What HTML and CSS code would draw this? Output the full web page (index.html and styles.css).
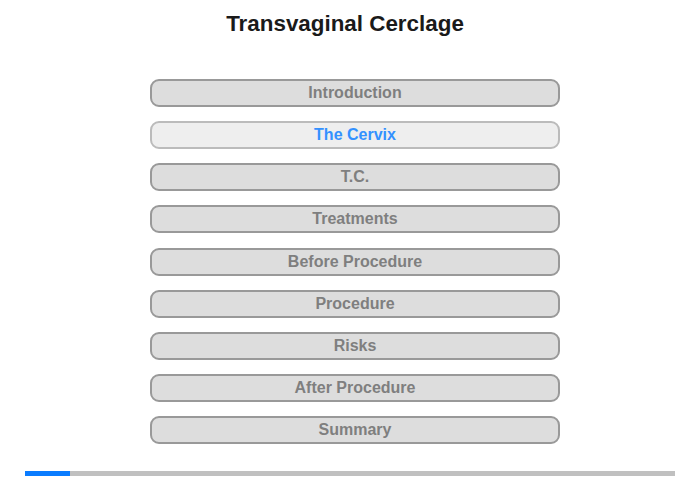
FILE: index.html
```html
<!DOCTYPE html>
<html lang="en">
<head>
    <meta charset="UTF-8">
    <title>Transvaginal Cerclage</title>
    <link rel="stylesheet" href="styles.css">
</head>
<body>
    <div class="page">
        <h1>Transvaginal Cerclage</h1>

        <div class="menu">
            <a href="#" class="menu-item">Introduction</a>
            <a href="#" class="menu-item active">The Cervix</a>
            <a href="#" class="menu-item">T.C.</a>
            <a href="#" class="menu-item">Treatments</a>
            <a href="#" class="menu-item">Before Procedure</a>
            <a href="#" class="menu-item">Procedure</a>
            <a href="#" class="menu-item">Risks</a>
            <a href="#" class="menu-item">After Procedure</a>
            <a href="#" class="menu-item">Summary</a>
        </div>

        <div class="progress">
            <div class="progress-fill" style="width: 45px;"></div>
        </div>
    </div>
</body>
</html>
```

FILE: styles.css
```css
* {
    margin: 0;
    padding: 0;
    box-sizing: border-box;
}

body {
    background-color: #ffffff;
    font-family: "Liberation Sans", Arial, sans-serif;
    color: #222222;
}

.page {
    width: 700px;
    height: 480px;
    padding-top: 11px;
}

h1 {
    font-size: 22.4px;
    font-weight: 700;
    line-height: 26px;
    text-align: center;
    color: #1a1a1a;
    margin-right: 10px;
}

.menu {
    display: flex;
    flex-direction: column;
    align-items: center;
    gap: 14.125px;
    margin-top: 42px;
    padding-left: 10px;
}

.menu-item {
    display: block;
    width: 410px;
    height: 28px;
    line-height: 24px;
    border: 2px solid #999999;
    border-radius: 9px;
    background-color: #dddddd;
    color: #7f7f7f;
    font-size: 16px;
    font-weight: 700;
    text-align: center;
    text-decoration: none;
}

.menu-item.active {
    background-color: #eeeeee;
    border-color: #bbbbbb;
    color: #3391ff;
}

.progress {
    width: 650px;
    height: 5px;
    margin: 27px auto 0;
    background-color: #c0c0c0;
}

.progress-fill {
    height: 100%;
    background-color: #0a7cff;
}
```
